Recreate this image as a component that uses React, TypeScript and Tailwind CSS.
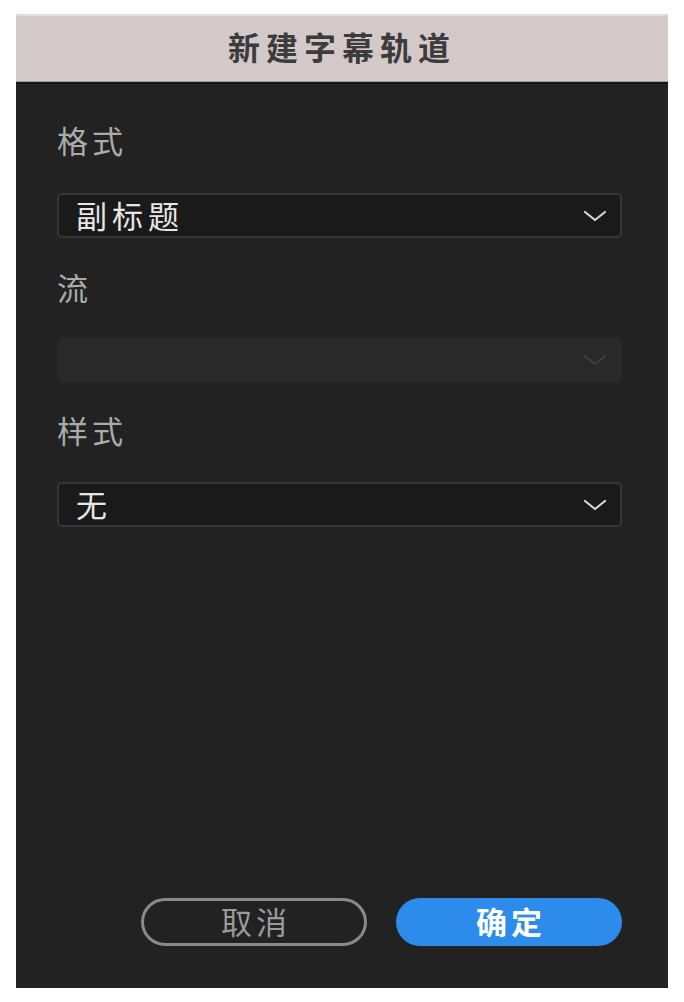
import React from "react";

const cjk = { fontFamily: '"Noto Sans CJK SC", "Noto Sans", sans-serif' };

function Chevron({ dim = false }: { dim?: boolean }) {
  return (
    <svg
      width="24"
      height="12"
      viewBox="0 0 24 12"
      fill="none"
      className={dim ? "text-[#3e3e3e]" : "text-[#d6d6d6]"}
    >
      <path
        d="M2 2 L12 10 L22 2"
        stroke="currentColor"
        strokeWidth={2.2}
        strokeLinecap="round"
        strokeLinejoin="round"
      />
    </svg>
  );
}

function Label({ text, className = "" }: { text: string; className?: string }) {
  return (
    <div
      className={`h-10 flex items-center pb-[3px] text-[31px] leading-none tracking-[4px] text-[#ababab] ${className}`}
    >
      {text}
    </div>
  );
}

function Select({ value, className = "" }: { value: string; className?: string }) {
  return (
    <div
      className={`h-[45px] flex items-center justify-between rounded-[5px] border-2 border-[#363636] bg-[#1a1a1a] pl-[17px] pr-[13px] ${className}`}
    >
      <span className="text-[31px] leading-none pb-[2px] tracking-[5px] text-[#e6e6e6]">
        {value}
      </span>
      <Chevron />
    </div>
  );
}

export default function App() {
  return (
    <div className="w-full h-[1002px] bg-white pt-[14px] px-[16px]" style={cjk}>
      <div className="w-[652px] h-[974px] flex flex-col bg-[#222222] overflow-hidden rounded-t-[3px]">
        {/* title bar */}
        <div className="h-[68px] flex items-center justify-center pb-[5px] bg-[#d3c9c9] border-t-2 border-[#e2dcdc] border-b border-b-[#a39c9c]">
          <h1 className="text-[32px] leading-none font-semibold tracking-[6px] text-[#3c3c3c]">
            新建字幕轨道
          </h1>
        </div>

        <div className="flex-1 flex flex-col border-t-2 border-[#171717] pt-[37px] pl-[41px] pr-[46px] pb-[42px]">
          <Label text="格式" />
          <Select value="副标题" className="mt-[32px]" />

          <Label text="流" className="mt-[30px]" />
          <div className="mt-[29px] h-[46px] flex items-center justify-end rounded-[5px] bg-[#292929] pr-[15px]">
            <Chevron dim />
          </div>

          <Label text="样式" className="mt-[28px]" />
          <Select value="无" className="mt-[31px]" />

          <div className="flex-1" />

          <div className="flex justify-end gap-[29px]">
            <button
              type="button"
              className="w-[226px] h-[48px] rounded-full border-[3px] border-[#8a8a8a] flex items-center justify-center pb-[3px] text-[31px] leading-none tracking-[4px] pl-[4px] text-[#9a9a9a]"
            >
              取消
            </button>
            <button
              type="button"
              className="w-[226px] h-[48px] rounded-full bg-[#2d8ceb] flex items-center justify-center pb-[3px] text-[31px] leading-none font-semibold tracking-[4px] pl-[4px] text-white"
            >
              确定
            </button>
          </div>
        </div>
      </div>
    </div>
  );
}
